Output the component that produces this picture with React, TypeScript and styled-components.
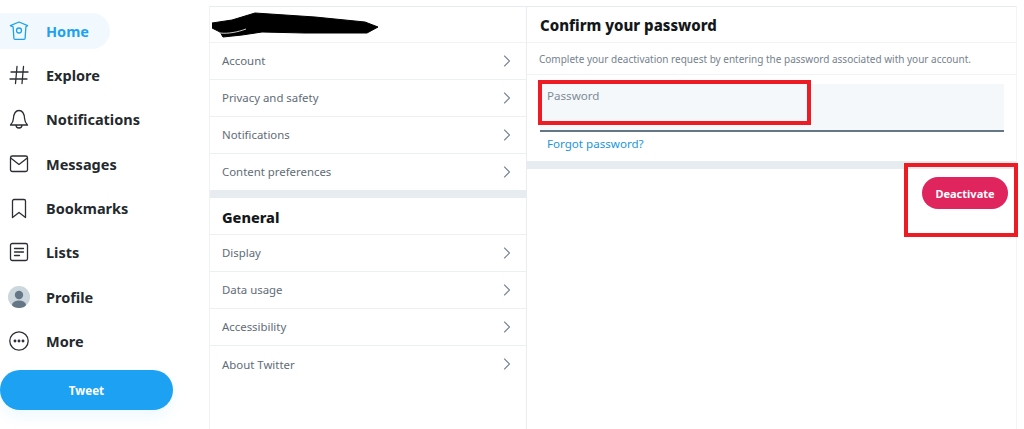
import React from "react";
import styled, { createGlobalStyle } from "styled-components";

const font = `"Noto Sans", "Open Sans", "Liberation Sans", sans-serif`;

const GlobalStyle = createGlobalStyle`
  html, body {
    margin: 0;
    padding: 0;
    background: #fff;
    overflow: hidden;
  }
  * {
    box-sizing: border-box;
  }
`;

const navItems = [
  { label: "Home", icon: "home", active: true },
  { label: "Explore", icon: "explore" },
  { label: "Notifications", icon: "bell" },
  { label: "Messages", icon: "mail" },
  { label: "Bookmarks", icon: "bookmark" },
  { label: "Lists", icon: "lists" },
  { label: "Profile", icon: "profile" },
  { label: "More", icon: "more" },
];

const accountRows = ["Account", "Privacy and safety", "Notifications", "Content preferences"];
const generalRows = ["Display", "Data usage", "Accessibility", "About Twitter"];

const NavIcon = ({ name }: { name: string }) => {
  if (name === "profile") {
    return (
      <svg width="22" height="22" viewBox="0 0 22 22">
        <defs>
          <clipPath id="avatar">
            <circle cx="11" cy="11" r="11" />
          </clipPath>
        </defs>
        <circle cx="11" cy="11" r="11" fill="#ccd6dd" />
        <g clipPath="url(#avatar)" fill="#657786">
          <circle cx="11" cy="9" r="4.2" />
          <ellipse cx="11" cy="19" rx="7" ry="4.6" />
        </g>
      </svg>
    );
  }
  const stroke = name === "home" ? "#1da1f2" : "#2b2f33";
  return (
    <svg width="22" height="22" viewBox="0 0 22 22" fill="none" stroke={stroke} strokeWidth="1.3" strokeLinejoin="round" strokeLinecap="round">
      {name === "home" && (
        <>
          <path d="M11 2 19.6 5.6l-1.7 1.2-.8 11.6a1 1 0 0 1-1 .9H6.9a1 1 0 0 1-1-.9L5.1 6.8 2.4 5.6z" />
          <circle cx="11" cy="10.5" r="2.5" />
        </>
      )}
      {name === "explore" && <path d="M3 8h17M2 15h17M9 2.5 7.5 19.5M15.5 2.5 14 19.5" />}
      {name === "bell" && (
        <path d="M2.5 17c1.7-1.6 2.7-3 2.9-6.3C5.7 6.3 7.6 2.5 11 2.5s5.3 3.8 5.6 8.2c.2 3.3 1.2 4.7 2.9 6.3zM8 17c0 2 1.3 3 3 3s3-1 3-3" />
      )}
      {name === "mail" && (
        <>
          <rect x="2.5" y="3" width="17" height="15.5" rx="1.8" />
          <path d="M2.7 5 11 11.5 19.3 5" />
        </>
      )}
      {name === "bookmark" && <path d="M4.5 4a1.5 1.5 0 0 1 1.5-1.5h10A1.5 1.5 0 0 1 17.5 4v16.5L11 15.5l-6.5 5z" />}
      {name === "lists" && (
        <>
          <rect x="2.5" y="2.5" width="17" height="17" rx="1.8" />
          <path d="M6.5 7.5h9M6.5 11h9M6.5 14.5h5" />
        </>
      )}
      {name === "more" && (
        <>
          <circle cx="11" cy="11" r="9.2" />
          <circle cx="7" cy="11" r=".8" fill={stroke} />
          <circle cx="11" cy="11" r=".8" fill={stroke} />
          <circle cx="15" cy="11" r=".8" fill={stroke} />
        </>
      )}
    </svg>
  );
};

const Chevron = () => (
  <svg width="10" height="14" viewBox="0 0 10 14" fill="none" stroke="#7b8894" strokeWidth="1.1" strokeLinecap="round" strokeLinejoin="round">
    <path d="M2.5 2 7.5 7l-5 5" />
  </svg>
);

const App = () => {
  return (
    <Page>
      <GlobalStyle />
      <Sidebar>
        <NavList>
          {navItems.map((item) => (
            <NavItem key={item.label} $active={item.active}>
              <NavIconSlot>
                <NavIcon name={item.icon} />
              </NavIconSlot>
              {item.label}
            </NavItem>
          ))}
        </NavList>
        <TweetButton>Tweet</TweetButton>
      </Sidebar>

      <SettingsColumn>
        <UserRow>
          <svg width="170" height="28" viewBox="0 0 170 28">
            <path
              d="M0 13 20 10 43 3l60 4 50 5 13 5-11 6-62 0-43-1-20 3-19 2-3-5L0 18z"
              fill="#000"
              stroke="#000"
              strokeLinejoin="round"
            />
            <path d="M8 23c8 1 18-1 26-4" stroke="#fff" strokeWidth="0.8" fill="none" />
          </svg>
        </UserRow>
        {accountRows.map((row) => (
          <MenuRow key={row}>
            {row}
            <Chevron />
          </MenuRow>
        ))}
        <Band />
        <SectionHeading>General</SectionHeading>
        {generalRows.map((row) => (
          <MenuRow key={row}>
            {row}
            <Chevron />
          </MenuRow>
        ))}
      </SettingsColumn>

      <ConfirmColumn>
        <ConfirmTitle>Confirm your password</ConfirmTitle>
        <Description>
          Complete your deactivation request by entering the password associated with your account.
        </Description>
        <PasswordSection>
          <PasswordField>Password</PasswordField>
          <ForgotLink>Forgot password?</ForgotLink>
        </PasswordSection>
        <ConfirmBand />
        <ButtonRow>
          <DeactivateButton>Deactivate</DeactivateButton>
        </ButtonRow>
        <PasswordMark />
        <DeactivateMark />
      </ConfirmColumn>
    </Page>
  );
};

export default App;

const Page = styled.div`
  width: 1024px;
  height: 429px;
  display: flex;
  overflow: hidden;
  background: #fff;
  font-family: ${font};
`;

const Sidebar = styled.aside`
  width: 209px;
  flex-shrink: 0;
  padding-top: 13px;
`;

const NavList = styled.nav`
  display: flex;
  flex-direction: column;
  gap: 8.35px;
`;

const NavItem = styled.div<{ $active?: boolean }>`
  width: ${(p) => (p.$active ? "110px" : "auto")};
  height: 36px;
  display: flex;
  align-items: center;
  padding: 0 0 1px 8px;
  border-radius: 0 18px 18px 0;
  background: ${(p) => (p.$active ? "#f2f9fe" : "transparent")};
  color: ${(p) => (p.$active ? "#1da1f2" : "#24292d")};
  font-size: 14.5px;
  font-weight: 700;
`;

const NavIconSlot = styled.span`
  width: 38px;
  height: 22px;
  display: flex;
`;

const TweetButton = styled.button`
  display: block;
  width: 173px;
  height: 40px;
  margin-top: 11px;
  border: 0;
  border-radius: 20px;
  background: #1da1f2;
  box-shadow: 0 6px 14px rgba(29, 161, 242, 0.08);
  color: #fff;
  font-family: ${font};
  font-size: 11.6px;
  font-weight: 700;
`;

const SettingsColumn = styled.section`
  width: 318px;
  height: 429px;
  flex-shrink: 0;
  margin-top: 6px;
  border-top: 1px solid #e6ecf0;
  border-right: 1px solid #e9edf0;
  border-left: 1px solid #f0f3f5;
`;

const UserRow = styled.div`
  height: 36px;
  padding: 3px 0 0 2px;
  display: flex;
  align-items: flex-start;
  border-bottom: 1px solid #f0f3f5;
`;

const MenuRow = styled.div`
  height: 37px;
  display: flex;
  align-items: center;
  justify-content: space-between;
  padding: 0 14px 1px 12px;
  border-bottom: 1px solid #edf0f3;
  color: #616c76;
  font-size: 11.4px;

  &:last-child {
    border-bottom: 0;
  }
`;

const Band = styled.div`
  height: 8px;
  margin-top: -1px;
  background: #e6ecf0;
`;

const SectionHeading = styled.h2`
  height: 37px;
  margin: 0;
  padding: 2px 0 0 12px;
  display: flex;
  align-items: center;
  border-bottom: 1px solid #edf0f3;
  color: #14171a;
  font-size: 14.5px;
  font-weight: 800;
`;

const ConfirmColumn = styled.section`
  position: relative;
  width: 490px;
  height: 429px;
  flex-shrink: 0;
  margin-top: 6px;
  border-top: 1px solid #e6ecf0;
  border-right: 1px solid #f2f4f6;
`;

const ConfirmTitle = styled.h2`
  height: 36px;
  margin: 0;
  padding-left: 13px;
  display: flex;
  align-items: center;
  border-bottom: 1px solid #f0f3f5;
  color: #14171a;
  font-size: 15px;
  font-weight: 800;
`;

const Description = styled.p`
  height: 32px;
  margin: 0;
  padding-left: 12px;
  display: flex;
  align-items: center;
  border-bottom: 1px solid #f0f3f5;
  color: #75828e;
  font-size: 10px;
`;

const PasswordSection = styled.div`
  padding: 9px 12px 0 13px;
`;

const PasswordField = styled.div`
  height: 48px;
  padding: 4px 7px;
  border-bottom: 2px solid #657786;
  background: #f5f8fa;
  color: #7d8b96;
  font-size: 11.6px;
`;

const ForgotLink = styled.a`
  display: block;
  height: 29px;
  padding: 4px 7px;
  color: #1b95e0;
  font-size: 11.6px;
`;

const ConfirmBand = styled.div`
  height: 8px;
  background: #e6ecf0;
`;

const ButtonRow = styled.div`
  display: flex;
  justify-content: flex-end;
  padding: 8px 8px 0 0;
`;

const DeactivateButton = styled.button`
  width: 86px;
  height: 32px;
  border: 0;
  border-radius: 16px;
  background: #e0245e;
  color: #fff;
  font-family: ${font};
  font-size: 11px;
  font-weight: 700;
`;

const PasswordMark = styled.div`
  position: absolute;
  left: 11px;
  top: 73px;
  width: 273px;
  height: 45px;
  border: 4px solid #ed1c24;
`;

const DeactivateMark = styled.div`
  position: absolute;
  left: 377px;
  top: 156px;
  width: 114px;
  height: 74px;
  border: 4px solid #ed1c24;
`;
